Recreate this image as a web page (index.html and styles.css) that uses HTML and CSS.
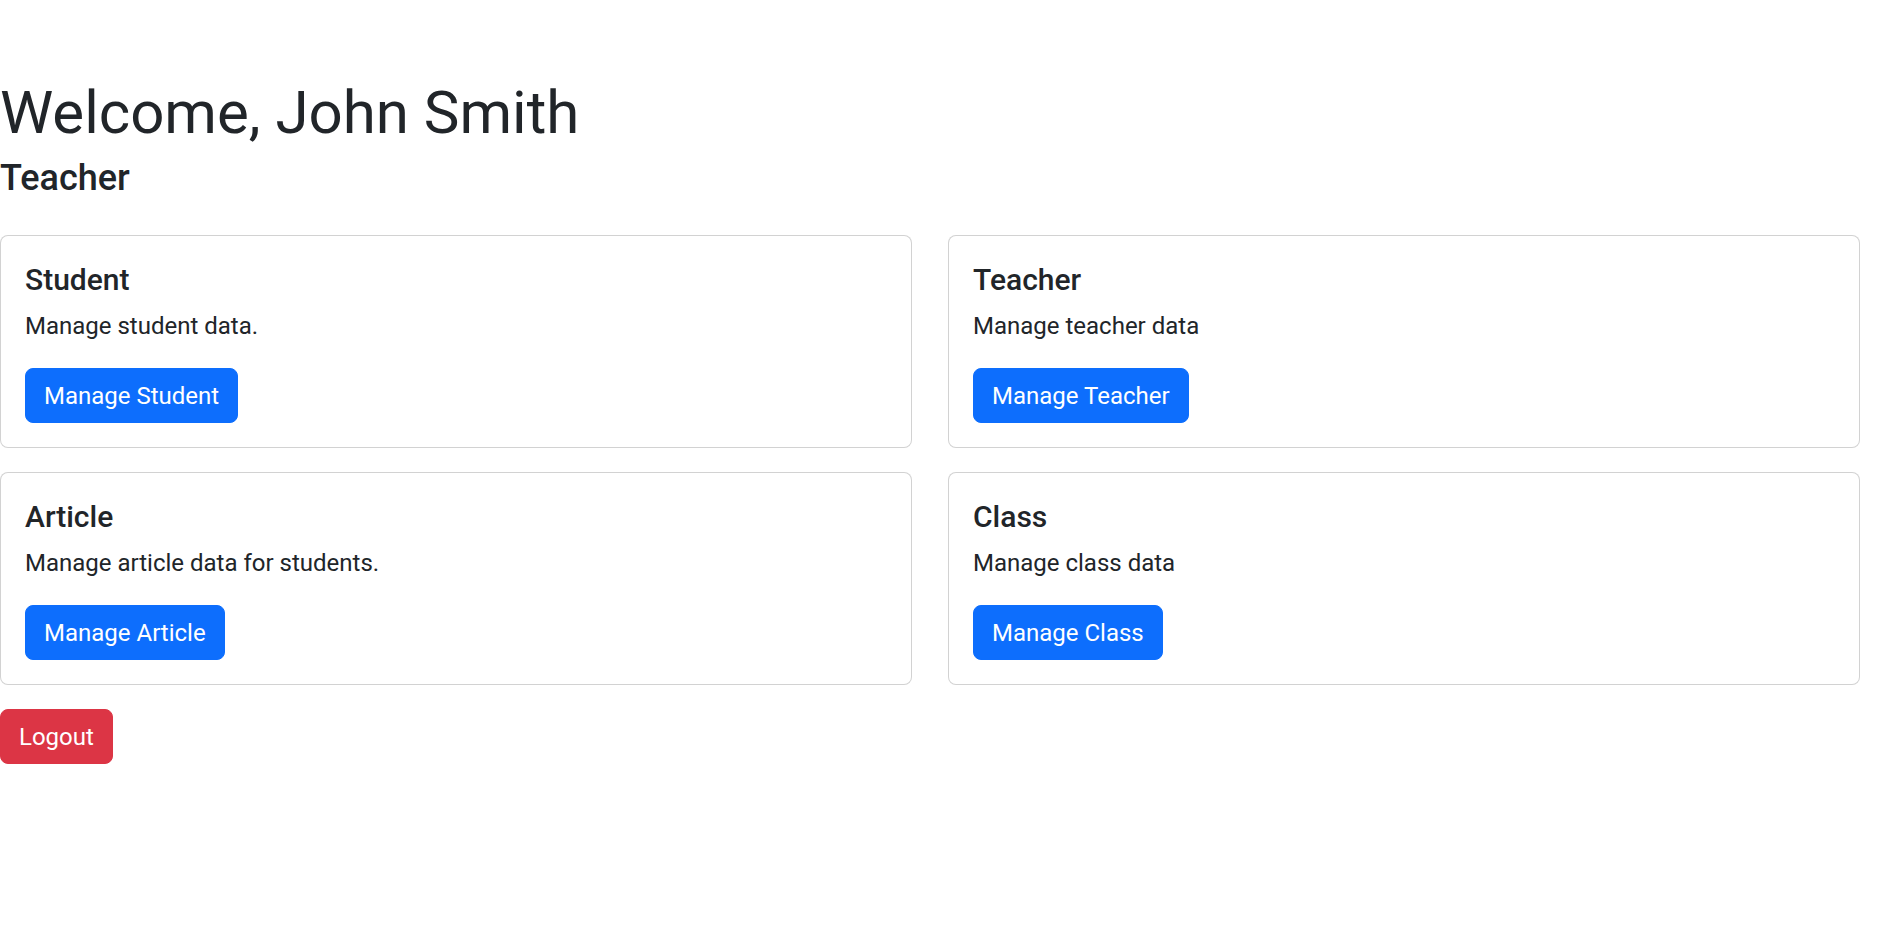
FILE: index.html
```html
<!DOCTYPE html>
<html lang="en">
<head>
<meta charset="utf-8">
<title>Dashboard</title>
<link rel="stylesheet" href="styles.css">
</head>
<body>
<main class="page">
  <h1 class="welcome">Welcome, John Smith</h1>
  <h4 class="role">Teacher</h4>
  <div class="cards">
    <div class="card">
      <h5 class="card-title">Student</h5>
      <p class="card-text">Manage student data.</p>
      <a class="btn btn-primary" href="#">Manage Student</a>
    </div>
    <div class="card">
      <h5 class="card-title">Teacher</h5>
      <p class="card-text">Manage teacher data</p>
      <a class="btn btn-primary" href="#">Manage Teacher</a>
    </div>
    <div class="card">
      <h5 class="card-title">Article</h5>
      <p class="card-text">Manage article data for students.</p>
      <a class="btn btn-primary" href="#">Manage Article</a>
    </div>
    <div class="card">
      <h5 class="card-title">Class</h5>
      <p class="card-text">Manage class data</p>
      <a class="btn btn-primary" href="#">Manage Class</a>
    </div>
  </div>
  <div class="actions">
    <a class="btn btn-danger" href="#">Logout</a>
  </div>
</main>
</body>
</html>
```
FILE: styles.css
```css
* { box-sizing: border-box; }
body {
  margin: 0;
  font-family: Roboto, "Liberation Sans", sans-serif;
  font-size: 24px;
  line-height: 1.5;
  color: #212529;
  background: #fff;
}
.page {
  width: 1860px;
}
.welcome {
  font-size: 60px;
  font-weight: 400;
  line-height: 1.2;
  margin: 77px 0 8px;
}
.role {
  font-size: 36px;
  font-weight: 500;
  line-height: 1.2;
  margin: 0 0 35px;
}
.cards {
  display: grid;
  grid-template-columns: 1fr 1fr;
  column-gap: 36px;
  row-gap: 24px;
}
.card {
  border: 1px solid rgba(0, 0, 0, 0.175);
  border-radius: 8px;
  padding: 24px;
  background: #fff;
}
.card-title {
  font-size: 30px;
  font-weight: 500;
  line-height: 1.2;
  margin: 0 0 10px;
  padding-top: 2px;
}
.card-text {
  margin: 0 0 24px;
}
.btn {
  display: inline-block;
  padding: 9px 18px 8px;
  font-size: 24px;
  line-height: 36px;
  font-weight: 400;
  color: #fff;
  text-decoration: none;
  border: 1px solid transparent;
  border-radius: 8px;
}
.btn-primary {
  background: #0d6efd;
  border-color: #0d6efd;
}
.btn-danger {
  background: #dc3545;
  border-color: #dc3545;
}
.actions {
  margin-top: 24px;
}
```
